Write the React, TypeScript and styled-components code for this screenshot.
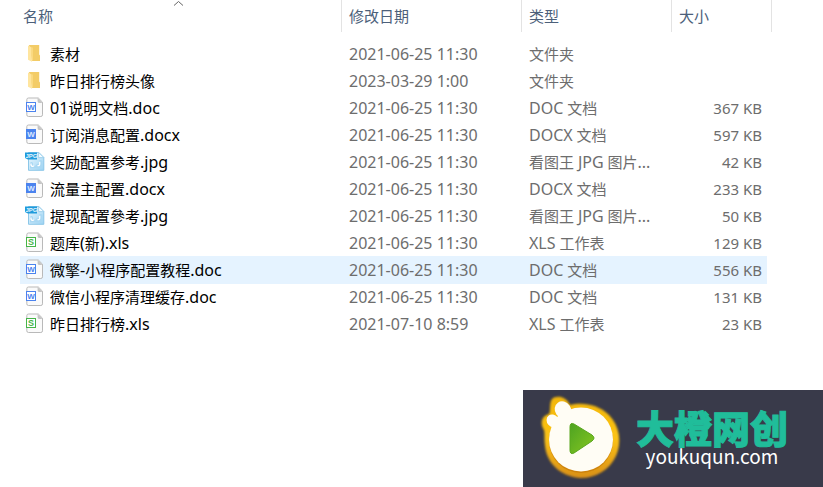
import React from "react";
import styled, { createGlobalStyle } from "styled-components";

const GlobalStyle = createGlobalStyle`
  * { box-sizing: border-box; }
  body {
    margin: 0;
    background: #fff;
    font-family: "Noto Sans", "Noto Sans CJK SC", sans-serif;
    font-size: 15px;
  }
`;

const Page = styled.div`
  min-height: 100vh;
  display: flex;
  flex-direction: column;
`;

const ListPane = styled.main`
  padding: 0 51px 0 20px;
`;

const FileTable = styled.table`
  width: 100%;
  table-layout: fixed;
  border-collapse: separate;
  border-spacing: 0;
`;

const Col = styled.col<{ $width?: number }>`
  width: ${(p) => (p.$width ? `${p.$width}px` : "auto")};
`;

const HeadCell = styled.th`
  position: relative;
  height: 32px;
  padding: 0;
  border-right: 1px solid #e3e3e3;
  font-weight: 400;
  text-align: left;
`;

const HeadButton = styled.button<{ $pad: number }>`
  display: block;
  width: 100%;
  height: 32px;
  padding: 0 0 0 ${(p) => p.$pad}px;
  border: 0;
  background: none;
  color: #4c607a;
  font: inherit;
  line-height: 32px;
  text-align: left;
`;

const SortMark = styled.svg`
  position: absolute;
  top: 0;
  left: 0;
  right: 4px;
  margin: 0 auto;
`;

const Spacer = styled.td`
  height: 8px;
  padding: 0;
`;

const Row = styled.tr<{ $selected?: boolean }>`
  color: #6d6d6d;
  --row: ${(p) => (p.$selected ? "#e5f3ff" : "transparent")};
`;

const Cell = styled.td<{ $end?: boolean }>`
  height: 27px;
  padding: 0 ${(p) => (p.$end ? 5 : 0)}px 0 7px;
  background: var(--row);
  box-shadow: 0 1px var(--row);
  line-height: 26px;
  white-space: nowrap;
  text-align: ${(p) => (p.$end ? "right" : "left")};
`;

const NameCell = styled(Cell)`
  padding: 0 0 0 5px;
  color: #000;
`;

const NameBox = styled.div`
  display: flex;
  align-items: center;
  gap: 5px;
  height: 27px;
`;

const Latin = styled.span`
  font-size: 16px;
`;

const Brand = styled.footer`
  width: 300px;
  height: 97px;
  margin-top: auto;
  align-self: flex-end;
  display: flex;
  align-items: center;
  gap: 14px;
  padding: 0 0 4px 15px;
  background: #393a4a;
`;

const BrandText = styled.div`
  display: flex;
  flex-direction: column;
  align-items: center;
  font-family: "Noto Sans CJK SC", sans-serif;
  white-space: nowrap;
`;

const BrandName = styled.strong`
  color: #20bd9a;
  font-size: 38px;
  font-weight: 900;
  line-height: 38px;
  -webkit-text-stroke: 1px #20bd9a;
`;

const BrandSite = styled.span`
  color: #fff;
  font-size: 19px;
  line-height: 20px;
`;

type Kind = "folder" | "doc" | "docx" | "jpg" | "xls";

function PaperIcon({ kind }: { kind: "doc" | "docx" | "xls" }) {
  const accent = kind === "xls" ? "#45b549" : "#4b83ee";
  const filled = kind === "docx";
  return (
    <svg width="20" height="21" viewBox="0 0 20 21" aria-hidden="true">
      <path d="M3.5 1h9.8l4.2 4.2v12.6a1.7 1.7 0 0 1-1.7 1.7H3.5a1.7 1.7 0 0 1-1.7-1.7V2.7A1.7 1.7 0 0 1 3.5 1z" fill="#fafafa" stroke="#b9b9b9" />
      <path d="M12.6 1v3.5a1.4 1.4 0 0 0 1.4 1.4h3.5z" fill="#c4c4c4" />
      <rect x="1.5" y="5.5" width="9" height="9" fill={filled ? accent : "#fff"} stroke={accent} />
      <text x="6" y="13" textAnchor="middle" fontFamily="Liberation Sans" fontWeight="700" fontSize={kind === "xls" ? 9 : 8} fill={filled ? "#dce8ff" : accent}>
        {kind === "xls" ? "S" : "W"}
      </text>
    </svg>
  );
}

function FolderIcon() {
  return (
    <svg width="20" height="21" viewBox="0 0 20 21" aria-hidden="true">
      <path d="M4 2h10.2v9.5l.8 1V18H7z" fill="#f3cc67" />
      <path d="M3 2.5 6.6 4.6v14L3 16.8z" fill="#ffe59e" />
      <path d="M6.6 4.6H8V17l-1.4 1.8z" fill="#fbd97f" />
    </svg>
  );
}

function JpgIcon() {
  return (
    <svg width="20" height="21" viewBox="0 0 20 21" aria-hidden="true">
      <defs>
        <linearGradient id="jpgPaper" x1="0" y1="0" x2="1" y2="1">
          <stop offset="0" stopColor="#eef9ff" />
          <stop offset="1" stopColor="#9bd3f3" />
        </linearGradient>
      </defs>
      <path d="M3.5 1.5h10.3l5 5v12.8H3.5z" fill="url(#jpgPaper)" stroke="#8cc7e8" />
      <path d="M13.6 1.4v5.2h5.2z" fill="#f5fcff" stroke="#8cc7e8" strokeWidth=".7" />
      <path d="M5 12q1.5-2 3 0v2q1.5 2 3 0t3-1v-3q1.5-2 3.5 0v7.6H5z" fill="#a9d8f3" />
      <path d="M6 12.5v1.6q1.5 2.4 3 .6M12.5 14.5q2 .8 2.2-1.4v-2.4" fill="none" stroke="#fff" strokeWidth="1.3" />
      <path d="M0 1.4h12v7H2.8L0 7z" fill="#209bdc" />
      <text x="6.4" y="7" textAnchor="middle" fontFamily="Liberation Sans" fontSize="6" fontWeight="700" fill="#e5f7ff">JPG</text>
    </svg>
  );
}

function FileIcon({ kind }: { kind: Kind }) {
  if (kind === "folder") return <FolderIcon />;
  if (kind === "jpg") return <JpgIcon />;
  return <PaperIcon kind={kind} />;
}

/* Latin runs are set one pixel larger than the Chinese beside them. */
function MixedText({ children }: { children: string }) {
  return (
    <span>
      {children.split(/([\x21-\x7e]+)/).map((part, i) =>
        i % 2 ? <Latin key={i}>{part}</Latin> : part
      )}
    </span>
  );
}

interface Entry {
  name: string;
  date: string;
  type: string;
  size: string;
  kind: Kind;
  selected?: boolean;
}

const files: Entry[] = [
  { name: "素材", date: "2021-06-25 11:30", type: "文件夹", size: "", kind: "folder" },
  { name: "昨日排行榜头像", date: "2023-03-29 1:00", type: "文件夹", size: "", kind: "folder" },
  { name: "01说明文档.doc", date: "2021-06-25 11:30", type: "DOC 文档", size: "367 KB", kind: "doc" },
  { name: "订阅消息配置.docx", date: "2021-06-25 11:30", type: "DOCX 文档", size: "597 KB", kind: "docx" },
  { name: "奖励配置参考.jpg", date: "2021-06-25 11:30", type: "看图王 JPG 图片...", size: "42 KB", kind: "jpg" },
  { name: "流量主配置.docx", date: "2021-06-25 11:30", type: "DOCX 文档", size: "233 KB", kind: "docx" },
  { name: "提现配置參考.jpg", date: "2021-06-25 11:30", type: "看图王 JPG 图片...", size: "50 KB", kind: "jpg" },
  { name: "题库(新).xls", date: "2021-06-25 11:30", type: "XLS 工作表", size: "129 KB", kind: "xls" },
  { name: "微擎-小程序配置教程.doc", date: "2021-06-25 11:30", type: "DOC 文档", size: "556 KB", kind: "doc", selected: true },
  { name: "微信小程序清理缓存.doc", date: "2021-06-25 11:30", type: "DOC 文档", size: "131 KB", kind: "doc" },
  { name: "昨日排行榜.xls", date: "2021-07-10 8:59", type: "XLS 工作表", size: "23 KB", kind: "xls" },
];

function BrandLogo() {
  return (
    <svg width="84" height="90" viewBox="0 0 84 90" aria-hidden="true">
      <defs>
        <linearGradient id="rim" x1="0" y1="0" x2="0" y2="1">
          <stop offset="0" stopColor="#f2b60c" />
          <stop offset=".5" stopColor="#fcc313" />
          <stop offset="1" stopColor="#d98f12" />
        </linearGradient>
        <linearGradient id="play" x1="0" y1="0" x2="1" y2="1">
          <stop offset="0" stopColor="#4da322" />
          <stop offset="1" stopColor="#86c720" />
        </linearGradient>
        <filter id="soft" x="-10%" y="-10%" width="120%" height="120%">
          <feGaussianBlur stdDeviation=".8" />
        </filter>
      </defs>
      <path filter="url(#soft)" fill="url(#rim)" d="M14 7C18 3 28 4 32 13C44 10 60 12 71 23C82 34 84 51 78 64C71 79 56 87 41 86C23 84 9 72 7 54C6 48 7 42 6 38C2 32 3 24 11 22C13 19 11 11 14 7z" />
      <circle cx="43" cy="49" r="32" fill="#b96800" opacity=".45" />
      <g fill="#fffdf5">
        <circle cx="43" cy="47.5" r="32" />
        <ellipse cx="25" cy="18" rx="8" ry="9" transform="rotate(-35 25 18)" />
        <ellipse cx="15" cy="29" rx="6" ry="7" transform="rotate(-40 15 29)" />
        <path d="M19 25l12-9 8 9-17 17-8-9z" />
      </g>
      <path d="M36 32Q32 30 32 35v23q0 5 4 3l18-12q4-3 0-6z" fill="url(#play)" stroke="#58a61d" />
    </svg>
  );
}

export default function App() {
  return (
    <Page>
      <GlobalStyle />
      <ListPane>
        <FileTable>
          <colgroup>
            <Col />
            <Col $width={180} />
            <Col $width={150} />
            <Col $width={95} />
            <Col $width={5} />
          </colgroup>
          <thead>
            <tr>
              <HeadCell aria-sort="ascending">
                <HeadButton $pad={3}>名称</HeadButton>
                <SortMark width="11" height="7" viewBox="0 0 11 7" aria-hidden="true">
                  <path d="M1 5.5 5.5 1.5 10 5.5" fill="none" stroke="#666" />
                </SortMark>
              </HeadCell>
              <HeadCell><HeadButton $pad={7}>修改日期</HeadButton></HeadCell>
              <HeadCell><HeadButton $pad={7}>类型</HeadButton></HeadCell>
              <HeadCell colSpan={2}><HeadButton $pad={7}>大小</HeadButton></HeadCell>
            </tr>
          </thead>
          <tbody>
            <tr><Spacer colSpan={5} /></tr>
            {files.map((f) => (
              <Row key={f.name} $selected={f.selected} aria-selected={!!f.selected}>
                <NameCell>
                  <NameBox>
                    <FileIcon kind={f.kind} />
                    <MixedText>{f.name}</MixedText>
                  </NameBox>
                </NameCell>
                <Cell><Latin>{f.date}</Latin></Cell>
                <Cell><MixedText>{f.type}</MixedText></Cell>
                <Cell $end>{f.size}</Cell>
              </Row>
            ))}
          </tbody>
        </FileTable>
      </ListPane>
      <Brand>
        <BrandLogo />
        <BrandText>
          <BrandName>大橙网创</BrandName>
          <BrandSite>youkuqun.com</BrandSite>
        </BrandText>
      </Brand>
    </Page>
  );
}
